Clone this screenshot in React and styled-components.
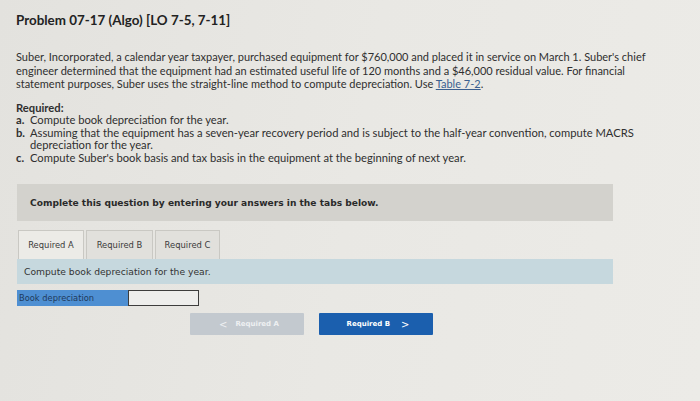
import React from "react";
import styled, { createGlobalStyle } from "styled-components";

const Global = createGlobalStyle`
  html, body { margin: 0; padding: 0; }
  body {
    width: 700px; height: 401px; overflow: hidden;
    background: linear-gradient(100deg, #e3e2de 0%, #e9e8e4 50%, #ecebe7 100%);
    font-family: Lato, "Open Sans", sans-serif;
    color: #2b2b2b;
  }
`;

const Page = styled.div`
  padding: 11px 16px 0 16px;
  display: flex;
  flex-direction: column;
`;

const Title = styled.h1`
  margin: 0;
  font-family: Lato, sans-serif;
  font-weight: 700;
  font-size: 13.4px;
  line-height: 18px;
  color: #222;
`;

const Para = styled.p`
  margin: 21px 0 0 0;
  font-size: 11px;
  line-height: 13.6px;
  white-space: nowrap;
  color: #2f2f2f;
`;

const Link = styled.a`
  color: #3b5f8f;
  text-decoration: underline;
`;

const Req = styled.div`
  margin-top: 11px;
  font-size: 11.2px;
  line-height: 12.5px;
  color: #2f2f2f;
`;

const ReqHead = styled.div`
  font-weight: 700;
`;

const ReqList = styled.ol`
  margin: 0;
  padding: 0;
  list-style: none;
`;

const ReqItem = styled.li`
  display: flex;
  white-space: nowrap;
`;

const Letter = styled.span`
  width: 14px;
  flex: none;
  font-weight: 700;
`;

const Banner = styled.div`
  margin: 20px 0 0 1px;
  width: 596px;
  height: 37px;
  background: #d3d2cd;
  display: flex;
  align-items: center;
  padding-left: 13px;
  box-sizing: border-box;
  font-family: "DejaVu Sans", Verdana, sans-serif;
  font-weight: 700;
  font-size: 9.1px;
  color: #2a2a2a;
`;

const Tabs = styled.div`
  margin: 9px 0 0 2px;
  display: flex;
  gap: 2px;
`;

const Tab = styled.div`
  width: ${p => p.$w}px;
  height: 29px;
  box-sizing: border-box;
  border: 1px solid #c9c8c3;
  border-bottom: none;
  background: ${p => (p.$active ? "#ecebe7" : "#e1e0dc")};
  display: flex;
  align-items: center;
  justify-content: center;
  font-family: "DejaVu Sans", Verdana, sans-serif;
  font-size: 8.4px;
  color: #3a3a3a;
`;

const Info = styled.div`
  margin-left: 1px;
  width: 596px;
  height: 25px;
  background: #c6d8de;
  display: flex;
  align-items: center;
  padding-left: 7px;
  box-sizing: border-box;
  font-family: "DejaVu Sans", Verdana, sans-serif;
  font-size: 9.2px;
  color: #333;
`;

const Row = styled.div`
  margin: 6px 0 0 1px;
  display: flex;
  height: 16px;
`;

const Label = styled.div`
  width: 111px;
  background: #4e8fd2;
  display: flex;
  align-items: center;
  padding-left: 2px;
  box-sizing: border-box;
  font-family: "DejaVu Sans", Verdana, sans-serif;
  font-size: 8.3px;
  color: #1f3a5c;
`;

const Input = styled.input`
  width: 71px;
  height: 16px;
  box-sizing: border-box;
  border: 1px solid #3d3d3d;
  background: #eeeeec;
  margin: 0;
  padding: 0;
`;

const Nav = styled.div`
  margin: 7px 0 0 174px;
  display: flex;
  gap: 15px;
`;

const NavBtn = styled.button`
  width: 114px;
  height: 22px;
  border: none;
  border-radius: 1px;
  background: ${p => (p.$primary ? "#1b5fae" : "#c3c9cf")};
  color: ${p => (p.$primary ? "#fff" : "#eef0f2")};
  font-family: "DejaVu Sans", Verdana, sans-serif;
  font-weight: 700;
  font-size: 7px;
  display: flex;
  align-items: center;
  justify-content: center;
  gap: ${p => (p.$primary ? "11px" : "8px")};
  padding: 0;
  padding-left: ${p => (p.$primary ? "4px" : "4px")};
`;

const Chev = styled.span`
  font-size: 10px;
  font-weight: 400;
`;

export default function App() {
  return (
    <>
      <Global />
      <Page>
        <Title>Problem 07-17 (Algo) [LO 7-5, 7-11]</Title>
        <Para>
          Suber, Incorporated, a calendar year taxpayer, purchased equipment for $760,000 and placed it in service on March 1. Suber's chief
          <br />
          engineer determined that the equipment had an estimated useful life of 120 months and a $46,000 residual value. For financial
          <br />
          statement purposes, Suber uses the straight-line method to compute depreciation. Use <Link>Table 7-2</Link>.
        </Para>
        <Req>
          <ReqHead>Required:</ReqHead>
          <ReqList>
            <ReqItem>
              <Letter>a.</Letter>
              <span>Compute book depreciation for the year.</span>
            </ReqItem>
            <ReqItem>
              <Letter>b.</Letter>
              <span>
                Assuming that the equipment has a seven-year recovery period and is subject to the half-year convention, compute MACRS
                <br />
                depreciation for the year.
              </span>
            </ReqItem>
            <ReqItem>
              <Letter>c.</Letter>
              <span>Compute Suber's book basis and tax basis in the equipment at the beginning of next year.</span>
            </ReqItem>
          </ReqList>
        </Req>
        <Banner>Complete this question by entering your answers in the tabs below.</Banner>
        <Tabs>
          <Tab $w={66} $active>Required A</Tab>
          <Tab $w={67}>Required B</Tab>
          <Tab $w={65}>Required C</Tab>
        </Tabs>
        <Info>Compute book depreciation for the year.</Info>
        <Row>
          <Label>Book depreciation</Label>
          <Input />
        </Row>
        <Nav>
          <NavBtn>
            <Chev>&lt;</Chev>
            <span>Required A</span>
          </NavBtn>
          <NavBtn $primary>
            <span>Required B</span>
            <Chev>&gt;</Chev>
          </NavBtn>
        </Nav>
      </Page>
    </>
  );
}
